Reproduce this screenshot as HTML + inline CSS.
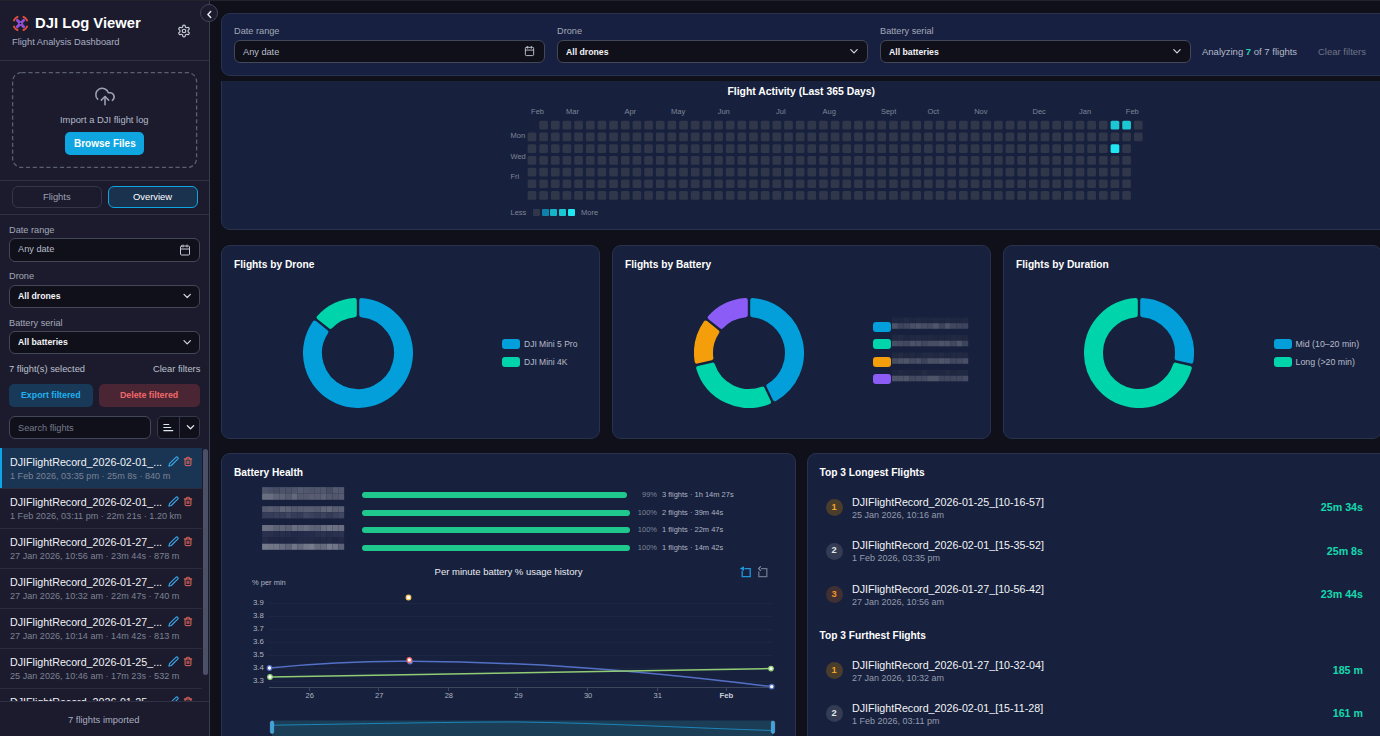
<!DOCTYPE html>
<html><head><meta charset="utf-8">
<style>
*{box-sizing:border-box;margin:0;padding:0}
html,body{width:1380px;height:736px;overflow:hidden;background:#0f1019;font-family:"Liberation Sans",sans-serif;color:#e5e7eb}
.abs{position:absolute}
#topstrip{position:absolute;left:0;top:0;width:1380px;height:1px;background:#22242d;z-index:8}
#sb{position:absolute;left:0;top:0;width:210px;height:736px;background:#1b1b2d;border-right:1px solid #383d4e}
.t{position:absolute;white-space:nowrap;line-height:1}
.hr{position:absolute;left:0;width:209px;height:1px;background:#2f3045}
.inp{position:absolute;background:#10101a;border:1px solid #434859;border-radius:6px}
.lbl{color:#a3a8b8}
.item{position:absolute;left:0;width:202px;height:40px}
.item:after{content:"";position:absolute;left:0;top:40px;width:202px;height:1px;background:#2a2b3e}
.item .n{position:absolute;left:10px;top:8.5px;font-size:10.7px;color:#f1f2f6;white-space:nowrap;line-height:1}
.item .d{position:absolute;left:10px;top:23.5px;font-size:9.1px;color:#7d8294;white-space:nowrap;line-height:1}
.item svg{position:absolute}
#main{position:absolute;left:0;top:0;width:1380px;height:736px;overflow:hidden}
.card{position:absolute;background:#17213d;border:1px solid #27324f;border-radius:9px}
</style></head><body>
<div id="topstrip"></div>
<div id="sb">
  <!-- logo -->
  <svg class="abs" style="left:12px;top:15px" width="17" height="17" viewBox="0 0 17 17">
    <g fill="none" stroke="#e54e3a" stroke-width="1.7" stroke-linecap="butt">
      <path d="M1.6 6.3 A7 7 0 0 1 6.3 1.6"/><path d="M10.7 1.6 A7 7 0 0 1 15.4 6.3"/>
      <path d="M15.4 10.7 A7 7 0 0 1 10.7 15.4"/><path d="M6.3 15.4 A7 7 0 0 1 1.6 10.7"/>
    </g>
    <g stroke="#8f50d6" stroke-width="2.9" stroke-linecap="round"><path d="M5.3 5.3 L11.7 11.7 M11.7 5.3 L5.3 11.7"/></g>
    <circle cx="8.5" cy="8.5" r="2.2" fill="#8f50d6"/>
    <circle cx="8.5" cy="8.5" r="0.8" fill="#15121f"/>
  </svg>
  <div class="t" style="left:35px;top:16px;font-size:14.8px;font-weight:700;color:#fff">DJI Log Viewer</div>
  <div class="t lbl" style="left:12px;top:38px;font-size:9.3px;color:#a9aec0">Flight Analysis Dashboard</div>
  <!-- gear -->
  <svg class="abs" style="left:177px;top:24px" width="14" height="14" viewBox="0 0 24 24" fill="none" stroke="#c9cdd8" stroke-width="2" stroke-linecap="round" stroke-linejoin="round"><path d="M12.22 2h-.44a2 2 0 0 0-2 2v.18a2 2 0 0 1-1 1.73l-.43.25a2 2 0 0 1-2 0l-.15-.08a2 2 0 0 0-2.73.73l-.22.38a2 2 0 0 0 .73 2.73l.15.1a2 2 0 0 1 1 1.72v.51a2 2 0 0 1-1 1.74l-.15.09a2 2 0 0 0-.73 2.73l.22.38a2 2 0 0 0 2.73.73l.15-.08a2 2 0 0 1 2 0l.43.25a2 2 0 0 1 1 1.73V20a2 2 0 0 0 2 2h.44a2 2 0 0 0 2-2v-.18a2 2 0 0 1 1-1.73l.43-.25a2 2 0 0 1 2 0l.15.08a2 2 0 0 0 2.73-.73l.22-.39a2 2 0 0 0-.73-2.73l-.15-.08a2 2 0 0 1-1-1.74v-.5a2 2 0 0 1 1-1.74l.15-.09a2 2 0 0 0 .73-2.73l-.22-.38a2 2 0 0 0-2.73-.73l-.15.08a2 2 0 0 1-2 0l-.43-.25a2 2 0 0 1-1-1.73V4a2 2 0 0 0-2-2z"/><circle cx="12" cy="12" r="3"/></svg>
  <div class="hr" style="top:60px"></div>
  <!-- upload -->
  <svg class="abs" style="left:11px;top:71px" width="188" height="98"><rect x="1.6" y="1.6" width="184" height="94.8" rx="9" fill="none" stroke="#5a5e70" stroke-width="1.3" stroke-dasharray="4.2 2.6"/></svg>
  <svg class="abs" style="left:94px;top:85px" width="22" height="23" viewBox="0 0 24 24" fill="none" stroke="#9ca1b3" stroke-width="1.7" stroke-linecap="round" stroke-linejoin="round"><path d="M4 14.9A7 7 0 1 1 15.7 8h1.8a4.5 4.5 0 0 1 2.5 8.2"/><path d="M12 12v9"/><path d="m16 16-4-4-4 4"/></svg>
  <div class="t" style="left:60px;top:115px;font-size:9.4px;color:#b4b9c8">Import a DJI flight log</div>
  <div class="abs" style="left:65px;top:132px;width:79px;height:23px;background:#0ea5e0;border-radius:5px"></div>
  <div class="t" style="left:74px;top:139px;font-size:10px;font-weight:700;color:#fff">Browse Files</div>
  <div class="hr" style="top:180px"></div>
  <!-- tabs -->
  <div class="abs" style="left:12px;top:186px;width:90px;height:22px;border:1px solid #34364a;border-radius:6px"></div>
  <div class="t" style="left:43px;top:192px;font-size:9.4px;color:#9ca1b3">Flights</div>
  <div class="abs" style="left:108px;top:186px;width:90px;height:22px;border:1px solid #0ea5e0;background:#1b324f;border-radius:6px"></div>
  <div class="t" style="left:133px;top:192px;font-size:9.4px;color:#fff">Overview</div>
  <div class="hr" style="top:214px"></div>
  <!-- filters -->
  <div class="t lbl" style="left:9px;top:225.5px;font-size:9.2px">Date range</div>
  <div class="inp" style="left:9px;top:238px;width:191px;height:24px"></div>
  <div class="t" style="left:18px;top:245px;font-size:9.2px;color:#b9bdca">Any date</div>
  <svg class="abs" style="left:179px;top:244px" width="12" height="12" viewBox="0 0 24 24" fill="none" stroke="#c2c6d2" stroke-width="2" stroke-linecap="round" stroke-linejoin="round"><rect x="3" y="4" width="18" height="18" rx="2"/><path d="M16 2v4M8 2v4M3 10h18"/></svg>
  <div class="t lbl" style="left:9px;top:271.5px;font-size:9.2px">Drone</div>
  <div class="inp" style="left:9px;top:285px;width:191px;height:23px"></div>
  <div class="t" style="left:18px;top:292px;font-size:8.7px;font-weight:700;color:#f3f4f7">All drones</div>
  <svg class="abs" style="left:0;top:0" width="210" height="736"><path d="M184 294.3 L187.2 297.5 L190.4 294.3" fill="none" stroke="#d4d8e0" stroke-width="1.2" stroke-linecap="round" stroke-linejoin="round"/></svg>
  <div class="t lbl" style="left:9px;top:318.5px;font-size:9.2px">Battery serial</div>
  <div class="inp" style="left:9px;top:331px;width:191px;height:23px"></div>
  <div class="t" style="left:18px;top:338px;font-size:8.7px;font-weight:700;color:#f3f4f7">All batteries</div>
  <svg class="abs" style="left:0;top:0" width="210" height="736"><path d="M184 340.6 L187.2 343.8 L190.4 340.6" fill="none" stroke="#d4d8e0" stroke-width="1.2" stroke-linecap="round" stroke-linejoin="round"/></svg>
  <div class="t" style="left:9px;top:364px;font-size:9.4px;color:#bcc0cc">7 flight(s) selected</div>
  <div class="t" style="left:153px;top:364px;font-size:9.4px;color:#bcc0cc">Clear filters</div>
  <div class="abs" style="left:9px;top:384px;width:84px;height:23px;background:#183a58;border-radius:5px"></div>
  <div class="t" style="left:21px;top:391px;font-size:8.8px;font-weight:700;color:#22b0ee">Export filtered</div>
  <div class="abs" style="left:99px;top:384px;width:101px;height:23px;background:#4a2534;border-radius:5px"></div>
  <div class="t" style="left:120px;top:391px;font-size:8.8px;font-weight:700;color:#f06a6a">Delete filtered</div>
  <div class="inp" style="left:9px;top:416px;width:142px;height:23px"></div>
  <div class="t" style="left:18px;top:424px;font-size:9.2px;color:#767b8d">Search flights</div>
  <div class="inp" style="left:157px;top:416px;width:43px;height:23px;background:#10101a;border-color:#343a4b;border-radius:5px"></div>
  <div class="abs" style="left:179px;top:417px;width:1px;height:21px;background:#343a4b"></div>
  <svg class="abs" style="left:0;top:0" width="210" height="736"><path d="M163.8 424.5h5M163.8 427.5h7M163.8 430.6h9" stroke="#dfe6ee" stroke-width="1.1" stroke-linecap="round"/><path d="M187.3 425.6 L190.5 428.8 L193.7 425.6" fill="none" stroke="#e6eaf0" stroke-width="1.3" stroke-linecap="round" stroke-linejoin="round"/></svg>
  <!-- list -->
  <div class="abs" style="left:0;top:448px;width:209px;height:253px;overflow:hidden" id="list"><div class="item" style="top:0px;background:#1a3553;"><div class="abs" style="left:0;top:0;width:2px;height:40px;background:#0ea5e9"></div><div class="n">DJIFlightRecord_2026-02-01_...</div><div class="d">1 Feb 2026, 03:35 pm · 25m 8s · 840 m</div><svg style="left:168px;top:8.3px" width="11" height="11" viewBox="0 0 24 24" fill="none" stroke="#38a8e8" stroke-width="2.4" stroke-linecap="round" stroke-linejoin="round"><path d="M21.2 6.8a2.8 2.8 0 0 0-4-4L3.8 16.2a2 2 0 0 0-.5.8l-1.3 4.4a.5.5 0 0 0 .6.6l4.4-1.3a2 2 0 0 0 .8-.5z"/></svg><svg style="left:183px;top:8.3px" width="10" height="11" viewBox="0 0 24 24" fill="none" stroke="#e8695f" stroke-width="2.4" stroke-linecap="round" stroke-linejoin="round"><path d="M3 6h18M19 6v14a2 2 0 0 1-2 2H7a2 2 0 0 1-2-2V6M8 6V4a2 2 0 0 1 2-2h4a2 2 0 0 1 2 2v2M10 11v6M14 11v6"/></svg></div><div class="item" style="top:40px;"><div class="n">DJIFlightRecord_2026-02-01_...</div><div class="d">1 Feb 2026, 03:11 pm · 22m 21s · 1.20 km</div><svg style="left:168px;top:8.3px" width="11" height="11" viewBox="0 0 24 24" fill="none" stroke="#38a8e8" stroke-width="2.4" stroke-linecap="round" stroke-linejoin="round"><path d="M21.2 6.8a2.8 2.8 0 0 0-4-4L3.8 16.2a2 2 0 0 0-.5.8l-1.3 4.4a.5.5 0 0 0 .6.6l4.4-1.3a2 2 0 0 0 .8-.5z"/></svg><svg style="left:183px;top:8.3px" width="10" height="11" viewBox="0 0 24 24" fill="none" stroke="#e8695f" stroke-width="2.4" stroke-linecap="round" stroke-linejoin="round"><path d="M3 6h18M19 6v14a2 2 0 0 1-2 2H7a2 2 0 0 1-2-2V6M8 6V4a2 2 0 0 1 2-2h4a2 2 0 0 1 2 2v2M10 11v6M14 11v6"/></svg></div><div class="item" style="top:80px;"><div class="n">DJIFlightRecord_2026-01-27_...</div><div class="d">27 Jan 2026, 10:56 am · 23m 44s · 878 m</div><svg style="left:168px;top:8.3px" width="11" height="11" viewBox="0 0 24 24" fill="none" stroke="#38a8e8" stroke-width="2.4" stroke-linecap="round" stroke-linejoin="round"><path d="M21.2 6.8a2.8 2.8 0 0 0-4-4L3.8 16.2a2 2 0 0 0-.5.8l-1.3 4.4a.5.5 0 0 0 .6.6l4.4-1.3a2 2 0 0 0 .8-.5z"/></svg><svg style="left:183px;top:8.3px" width="10" height="11" viewBox="0 0 24 24" fill="none" stroke="#e8695f" stroke-width="2.4" stroke-linecap="round" stroke-linejoin="round"><path d="M3 6h18M19 6v14a2 2 0 0 1-2 2H7a2 2 0 0 1-2-2V6M8 6V4a2 2 0 0 1 2-2h4a2 2 0 0 1 2 2v2M10 11v6M14 11v6"/></svg></div><div class="item" style="top:120px;"><div class="n">DJIFlightRecord_2026-01-27_...</div><div class="d">27 Jan 2026, 10:32 am · 22m 47s · 740 m</div><svg style="left:168px;top:8.3px" width="11" height="11" viewBox="0 0 24 24" fill="none" stroke="#38a8e8" stroke-width="2.4" stroke-linecap="round" stroke-linejoin="round"><path d="M21.2 6.8a2.8 2.8 0 0 0-4-4L3.8 16.2a2 2 0 0 0-.5.8l-1.3 4.4a.5.5 0 0 0 .6.6l4.4-1.3a2 2 0 0 0 .8-.5z"/></svg><svg style="left:183px;top:8.3px" width="10" height="11" viewBox="0 0 24 24" fill="none" stroke="#e8695f" stroke-width="2.4" stroke-linecap="round" stroke-linejoin="round"><path d="M3 6h18M19 6v14a2 2 0 0 1-2 2H7a2 2 0 0 1-2-2V6M8 6V4a2 2 0 0 1 2-2h4a2 2 0 0 1 2 2v2M10 11v6M14 11v6"/></svg></div><div class="item" style="top:160px;"><div class="n">DJIFlightRecord_2026-01-27_...</div><div class="d">27 Jan 2026, 10:14 am · 14m 42s · 813 m</div><svg style="left:168px;top:8.3px" width="11" height="11" viewBox="0 0 24 24" fill="none" stroke="#38a8e8" stroke-width="2.4" stroke-linecap="round" stroke-linejoin="round"><path d="M21.2 6.8a2.8 2.8 0 0 0-4-4L3.8 16.2a2 2 0 0 0-.5.8l-1.3 4.4a.5.5 0 0 0 .6.6l4.4-1.3a2 2 0 0 0 .8-.5z"/></svg><svg style="left:183px;top:8.3px" width="10" height="11" viewBox="0 0 24 24" fill="none" stroke="#e8695f" stroke-width="2.4" stroke-linecap="round" stroke-linejoin="round"><path d="M3 6h18M19 6v14a2 2 0 0 1-2 2H7a2 2 0 0 1-2-2V6M8 6V4a2 2 0 0 1 2-2h4a2 2 0 0 1 2 2v2M10 11v6M14 11v6"/></svg></div><div class="item" style="top:200px;"><div class="n">DJIFlightRecord_2026-01-25_...</div><div class="d">25 Jan 2026, 10:46 am · 17m 23s · 532 m</div><svg style="left:168px;top:8.3px" width="11" height="11" viewBox="0 0 24 24" fill="none" stroke="#38a8e8" stroke-width="2.4" stroke-linecap="round" stroke-linejoin="round"><path d="M21.2 6.8a2.8 2.8 0 0 0-4-4L3.8 16.2a2 2 0 0 0-.5.8l-1.3 4.4a.5.5 0 0 0 .6.6l4.4-1.3a2 2 0 0 0 .8-.5z"/></svg><svg style="left:183px;top:8.3px" width="10" height="11" viewBox="0 0 24 24" fill="none" stroke="#e8695f" stroke-width="2.4" stroke-linecap="round" stroke-linejoin="round"><path d="M3 6h18M19 6v14a2 2 0 0 1-2 2H7a2 2 0 0 1-2-2V6M8 6V4a2 2 0 0 1 2-2h4a2 2 0 0 1 2 2v2M10 11v6M14 11v6"/></svg></div><div class="item" style="top:240px;"><div class="n">DJIFlightRecord_2026-01-25_...</div><div class="d">25 Jan 2026, 10:16 am · 25m 34s · 600 m</div><svg style="left:168px;top:8.3px" width="11" height="11" viewBox="0 0 24 24" fill="none" stroke="#38a8e8" stroke-width="2.4" stroke-linecap="round" stroke-linejoin="round"><path d="M21.2 6.8a2.8 2.8 0 0 0-4-4L3.8 16.2a2 2 0 0 0-.5.8l-1.3 4.4a.5.5 0 0 0 .6.6l4.4-1.3a2 2 0 0 0 .8-.5z"/></svg><svg style="left:183px;top:8.3px" width="10" height="11" viewBox="0 0 24 24" fill="none" stroke="#e8695f" stroke-width="2.4" stroke-linecap="round" stroke-linejoin="round"><path d="M3 6h18M19 6v14a2 2 0 0 1-2 2H7a2 2 0 0 1-2-2V6M8 6V4a2 2 0 0 1 2-2h4a2 2 0 0 1 2 2v2M10 11v6M14 11v6"/></svg></div></div>
  <div class="abs" style="left:203px;top:449px;width:5px;height:226px;background:#4b5067;border-radius:3px"></div>
  <div class="hr" style="top:701px"></div>
  <div class="t" style="left:68px;top:715px;font-size:9.4px;color:#a9aec0">7 flights imported</div>
</div>
<!-- collapse btn -->
<div class="abs" style="left:200px;top:4px;width:18px;height:18px;border-radius:50%;background:#1b1b2d;border:1px solid #40455a;z-index:6"></div>
<svg class="abs" style="left:0;top:0;z-index:7" width="230" height="30"><path d="M210.7 11.5 L207.9 14.5 L210.7 17.5" fill="none" stroke="#e6e8ee" stroke-width="1.5" stroke-linecap="round" stroke-linejoin="round"/></svg>
<div id="main"><div class="abs" style="left:210px;top:0;width:1170px;height:81px;background:#0f1019;z-index:3"></div>
<div class="card" style="left:221px;top:13px;width:1170px;height:63px;z-index:4;background:#172040"></div>
<div class="t" style="left:234px;top:27px;font-size:9.2px;color:#a3a8b8;font-weight:400;z-index:5;">Date range</div>
<div class="t" style="left:557px;top:27px;font-size:9.2px;color:#a3a8b8;font-weight:400;z-index:5;">Drone</div>
<div class="t" style="left:880px;top:27px;font-size:9.2px;color:#a3a8b8;font-weight:400;z-index:5;">Battery serial</div>
<div class="inp" style="left:234px;top:40px;width:311px;height:23px;z-index:5;"></div>
<div class="inp" style="left:557px;top:40px;width:311px;height:23px;z-index:5;"></div>
<div class="inp" style="left:880px;top:40px;width:311px;height:23px;z-index:5;"></div>
<div class="t" style="left:243px;top:47.5px;font-size:9.2px;color:#b9bdca;font-weight:400;z-index:5;">Any date</div>
<svg class="abs" style="left:524px;top:45px;z-index:5;" width="11" height="12" viewBox="0 0 24 24" fill="none" stroke="#c2c6d2" stroke-width="2" stroke-linecap="round" stroke-linejoin="round"><rect x="3" y="4" width="18" height="18" rx="2"/><path d="M16 2v4M8 2v4M3 10h18"/></svg>
<div class="t" style="left:566px;top:47.5px;font-size:8.7px;color:#f3f4f7;font-weight:700;z-index:5;">All drones</div>
<div class="t" style="left:889px;top:47.5px;font-size:8.7px;color:#f3f4f7;font-weight:700;z-index:5;">All batteries</div>
<svg class="abs" style="left:0;top:0;z-index:5;" width="1380" height="80"><path d="M850.8 49.6 L854 52.8 L857.2 49.6" fill="none" stroke="#d4d8e0" stroke-width="1.2" stroke-linecap="round" stroke-linejoin="round"/></svg>
<svg class="abs" style="left:0;top:0;z-index:5;" width="1380" height="80"><path d="M1173.8 49.6 L1177 52.8 L1180.2 49.6" fill="none" stroke="#d4d8e0" stroke-width="1.2" stroke-linecap="round" stroke-linejoin="round"/></svg>
<div class="t" style="left:1202px;top:47px;font-size:9.5px;color:#b4b9c8;font-weight:400;z-index:5;">Analyzing <b style="color:#22d3b0">7</b> of 7 flights</div>
<div class="t" style="left:1318px;top:47px;font-size:9.5px;color:#6f7588;font-weight:400;z-index:5;">Clear filters</div>
<div class="card" style="left:221px;top:40px;width:1170px;height:189.5px"></div>
<div class="t" style="left:727.5px;top:86.5px;font-size:10.4px;color:#ffffff;font-weight:700;">Flight Activity (Last 365 Days)</div>
<svg class="abs" style="left:221px;top:81px" width="1160" height="148"><rect x="306.60" y="51.52" width="8.7" height="8.7" rx="1.5" fill="#31374b"/><rect x="306.60" y="63.24" width="8.7" height="8.7" rx="1.5" fill="#31374b"/><rect x="306.60" y="74.96" width="8.7" height="8.7" rx="1.5" fill="#31374b"/><rect x="306.60" y="86.68" width="8.7" height="8.7" rx="1.5" fill="#31374b"/><rect x="306.60" y="98.40" width="8.7" height="8.7" rx="1.5" fill="#31374b"/><rect x="306.60" y="110.12" width="8.7" height="8.7" rx="1.5" fill="#31374b"/><rect x="318.26" y="39.80" width="8.7" height="8.7" rx="1.5" fill="#31374b"/><rect x="318.26" y="51.52" width="8.7" height="8.7" rx="1.5" fill="#31374b"/><rect x="318.26" y="63.24" width="8.7" height="8.7" rx="1.5" fill="#31374b"/><rect x="318.26" y="74.96" width="8.7" height="8.7" rx="1.5" fill="#31374b"/><rect x="318.26" y="86.68" width="8.7" height="8.7" rx="1.5" fill="#31374b"/><rect x="318.26" y="98.40" width="8.7" height="8.7" rx="1.5" fill="#31374b"/><rect x="318.26" y="110.12" width="8.7" height="8.7" rx="1.5" fill="#31374b"/><rect x="329.92" y="39.80" width="8.7" height="8.7" rx="1.5" fill="#31374b"/><rect x="329.92" y="51.52" width="8.7" height="8.7" rx="1.5" fill="#31374b"/><rect x="329.92" y="63.24" width="8.7" height="8.7" rx="1.5" fill="#31374b"/><rect x="329.92" y="74.96" width="8.7" height="8.7" rx="1.5" fill="#31374b"/><rect x="329.92" y="86.68" width="8.7" height="8.7" rx="1.5" fill="#31374b"/><rect x="329.92" y="98.40" width="8.7" height="8.7" rx="1.5" fill="#31374b"/><rect x="329.92" y="110.12" width="8.7" height="8.7" rx="1.5" fill="#31374b"/><rect x="341.58" y="39.80" width="8.7" height="8.7" rx="1.5" fill="#31374b"/><rect x="341.58" y="51.52" width="8.7" height="8.7" rx="1.5" fill="#31374b"/><rect x="341.58" y="63.24" width="8.7" height="8.7" rx="1.5" fill="#31374b"/><rect x="341.58" y="74.96" width="8.7" height="8.7" rx="1.5" fill="#31374b"/><rect x="341.58" y="86.68" width="8.7" height="8.7" rx="1.5" fill="#31374b"/><rect x="341.58" y="98.40" width="8.7" height="8.7" rx="1.5" fill="#31374b"/><rect x="341.58" y="110.12" width="8.7" height="8.7" rx="1.5" fill="#31374b"/><rect x="353.24" y="39.80" width="8.7" height="8.7" rx="1.5" fill="#31374b"/><rect x="353.24" y="51.52" width="8.7" height="8.7" rx="1.5" fill="#31374b"/><rect x="353.24" y="63.24" width="8.7" height="8.7" rx="1.5" fill="#31374b"/><rect x="353.24" y="74.96" width="8.7" height="8.7" rx="1.5" fill="#31374b"/><rect x="353.24" y="86.68" width="8.7" height="8.7" rx="1.5" fill="#31374b"/><rect x="353.24" y="98.40" width="8.7" height="8.7" rx="1.5" fill="#31374b"/><rect x="353.24" y="110.12" width="8.7" height="8.7" rx="1.5" fill="#31374b"/><rect x="364.90" y="39.80" width="8.7" height="8.7" rx="1.5" fill="#31374b"/><rect x="364.90" y="51.52" width="8.7" height="8.7" rx="1.5" fill="#31374b"/><rect x="364.90" y="63.24" width="8.7" height="8.7" rx="1.5" fill="#31374b"/><rect x="364.90" y="74.96" width="8.7" height="8.7" rx="1.5" fill="#31374b"/><rect x="364.90" y="86.68" width="8.7" height="8.7" rx="1.5" fill="#31374b"/><rect x="364.90" y="98.40" width="8.7" height="8.7" rx="1.5" fill="#31374b"/><rect x="364.90" y="110.12" width="8.7" height="8.7" rx="1.5" fill="#31374b"/><rect x="376.56" y="39.80" width="8.7" height="8.7" rx="1.5" fill="#31374b"/><rect x="376.56" y="51.52" width="8.7" height="8.7" rx="1.5" fill="#31374b"/><rect x="376.56" y="63.24" width="8.7" height="8.7" rx="1.5" fill="#31374b"/><rect x="376.56" y="74.96" width="8.7" height="8.7" rx="1.5" fill="#31374b"/><rect x="376.56" y="86.68" width="8.7" height="8.7" rx="1.5" fill="#31374b"/><rect x="376.56" y="98.40" width="8.7" height="8.7" rx="1.5" fill="#31374b"/><rect x="376.56" y="110.12" width="8.7" height="8.7" rx="1.5" fill="#31374b"/><rect x="388.22" y="39.80" width="8.7" height="8.7" rx="1.5" fill="#31374b"/><rect x="388.22" y="51.52" width="8.7" height="8.7" rx="1.5" fill="#31374b"/><rect x="388.22" y="63.24" width="8.7" height="8.7" rx="1.5" fill="#31374b"/><rect x="388.22" y="74.96" width="8.7" height="8.7" rx="1.5" fill="#31374b"/><rect x="388.22" y="86.68" width="8.7" height="8.7" rx="1.5" fill="#31374b"/><rect x="388.22" y="98.40" width="8.7" height="8.7" rx="1.5" fill="#31374b"/><rect x="388.22" y="110.12" width="8.7" height="8.7" rx="1.5" fill="#31374b"/><rect x="399.88" y="39.80" width="8.7" height="8.7" rx="1.5" fill="#31374b"/><rect x="399.88" y="51.52" width="8.7" height="8.7" rx="1.5" fill="#31374b"/><rect x="399.88" y="63.24" width="8.7" height="8.7" rx="1.5" fill="#31374b"/><rect x="399.88" y="74.96" width="8.7" height="8.7" rx="1.5" fill="#31374b"/><rect x="399.88" y="86.68" width="8.7" height="8.7" rx="1.5" fill="#31374b"/><rect x="399.88" y="98.40" width="8.7" height="8.7" rx="1.5" fill="#31374b"/><rect x="399.88" y="110.12" width="8.7" height="8.7" rx="1.5" fill="#31374b"/><rect x="411.54" y="39.80" width="8.7" height="8.7" rx="1.5" fill="#31374b"/><rect x="411.54" y="51.52" width="8.7" height="8.7" rx="1.5" fill="#31374b"/><rect x="411.54" y="63.24" width="8.7" height="8.7" rx="1.5" fill="#31374b"/><rect x="411.54" y="74.96" width="8.7" height="8.7" rx="1.5" fill="#31374b"/><rect x="411.54" y="86.68" width="8.7" height="8.7" rx="1.5" fill="#31374b"/><rect x="411.54" y="98.40" width="8.7" height="8.7" rx="1.5" fill="#31374b"/><rect x="411.54" y="110.12" width="8.7" height="8.7" rx="1.5" fill="#31374b"/><rect x="423.20" y="39.80" width="8.7" height="8.7" rx="1.5" fill="#31374b"/><rect x="423.20" y="51.52" width="8.7" height="8.7" rx="1.5" fill="#31374b"/><rect x="423.20" y="63.24" width="8.7" height="8.7" rx="1.5" fill="#31374b"/><rect x="423.20" y="74.96" width="8.7" height="8.7" rx="1.5" fill="#31374b"/><rect x="423.20" y="86.68" width="8.7" height="8.7" rx="1.5" fill="#31374b"/><rect x="423.20" y="98.40" width="8.7" height="8.7" rx="1.5" fill="#31374b"/><rect x="423.20" y="110.12" width="8.7" height="8.7" rx="1.5" fill="#31374b"/><rect x="434.86" y="39.80" width="8.7" height="8.7" rx="1.5" fill="#31374b"/><rect x="434.86" y="51.52" width="8.7" height="8.7" rx="1.5" fill="#31374b"/><rect x="434.86" y="63.24" width="8.7" height="8.7" rx="1.5" fill="#31374b"/><rect x="434.86" y="74.96" width="8.7" height="8.7" rx="1.5" fill="#31374b"/><rect x="434.86" y="86.68" width="8.7" height="8.7" rx="1.5" fill="#31374b"/><rect x="434.86" y="98.40" width="8.7" height="8.7" rx="1.5" fill="#31374b"/><rect x="434.86" y="110.12" width="8.7" height="8.7" rx="1.5" fill="#31374b"/><rect x="446.52" y="39.80" width="8.7" height="8.7" rx="1.5" fill="#31374b"/><rect x="446.52" y="51.52" width="8.7" height="8.7" rx="1.5" fill="#31374b"/><rect x="446.52" y="63.24" width="8.7" height="8.7" rx="1.5" fill="#31374b"/><rect x="446.52" y="74.96" width="8.7" height="8.7" rx="1.5" fill="#31374b"/><rect x="446.52" y="86.68" width="8.7" height="8.7" rx="1.5" fill="#31374b"/><rect x="446.52" y="98.40" width="8.7" height="8.7" rx="1.5" fill="#31374b"/><rect x="446.52" y="110.12" width="8.7" height="8.7" rx="1.5" fill="#31374b"/><rect x="458.18" y="39.80" width="8.7" height="8.7" rx="1.5" fill="#31374b"/><rect x="458.18" y="51.52" width="8.7" height="8.7" rx="1.5" fill="#31374b"/><rect x="458.18" y="63.24" width="8.7" height="8.7" rx="1.5" fill="#31374b"/><rect x="458.18" y="74.96" width="8.7" height="8.7" rx="1.5" fill="#31374b"/><rect x="458.18" y="86.68" width="8.7" height="8.7" rx="1.5" fill="#31374b"/><rect x="458.18" y="98.40" width="8.7" height="8.7" rx="1.5" fill="#31374b"/><rect x="458.18" y="110.12" width="8.7" height="8.7" rx="1.5" fill="#31374b"/><rect x="469.84" y="39.80" width="8.7" height="8.7" rx="1.5" fill="#31374b"/><rect x="469.84" y="51.52" width="8.7" height="8.7" rx="1.5" fill="#31374b"/><rect x="469.84" y="63.24" width="8.7" height="8.7" rx="1.5" fill="#31374b"/><rect x="469.84" y="74.96" width="8.7" height="8.7" rx="1.5" fill="#31374b"/><rect x="469.84" y="86.68" width="8.7" height="8.7" rx="1.5" fill="#31374b"/><rect x="469.84" y="98.40" width="8.7" height="8.7" rx="1.5" fill="#31374b"/><rect x="469.84" y="110.12" width="8.7" height="8.7" rx="1.5" fill="#31374b"/><rect x="481.50" y="39.80" width="8.7" height="8.7" rx="1.5" fill="#31374b"/><rect x="481.50" y="51.52" width="8.7" height="8.7" rx="1.5" fill="#31374b"/><rect x="481.50" y="63.24" width="8.7" height="8.7" rx="1.5" fill="#31374b"/><rect x="481.50" y="74.96" width="8.7" height="8.7" rx="1.5" fill="#31374b"/><rect x="481.50" y="86.68" width="8.7" height="8.7" rx="1.5" fill="#31374b"/><rect x="481.50" y="98.40" width="8.7" height="8.7" rx="1.5" fill="#31374b"/><rect x="481.50" y="110.12" width="8.7" height="8.7" rx="1.5" fill="#31374b"/><rect x="493.16" y="39.80" width="8.7" height="8.7" rx="1.5" fill="#31374b"/><rect x="493.16" y="51.52" width="8.7" height="8.7" rx="1.5" fill="#31374b"/><rect x="493.16" y="63.24" width="8.7" height="8.7" rx="1.5" fill="#31374b"/><rect x="493.16" y="74.96" width="8.7" height="8.7" rx="1.5" fill="#31374b"/><rect x="493.16" y="86.68" width="8.7" height="8.7" rx="1.5" fill="#31374b"/><rect x="493.16" y="98.40" width="8.7" height="8.7" rx="1.5" fill="#31374b"/><rect x="493.16" y="110.12" width="8.7" height="8.7" rx="1.5" fill="#31374b"/><rect x="504.82" y="39.80" width="8.7" height="8.7" rx="1.5" fill="#31374b"/><rect x="504.82" y="51.52" width="8.7" height="8.7" rx="1.5" fill="#31374b"/><rect x="504.82" y="63.24" width="8.7" height="8.7" rx="1.5" fill="#31374b"/><rect x="504.82" y="74.96" width="8.7" height="8.7" rx="1.5" fill="#31374b"/><rect x="504.82" y="86.68" width="8.7" height="8.7" rx="1.5" fill="#31374b"/><rect x="504.82" y="98.40" width="8.7" height="8.7" rx="1.5" fill="#31374b"/><rect x="504.82" y="110.12" width="8.7" height="8.7" rx="1.5" fill="#31374b"/><rect x="516.48" y="39.80" width="8.7" height="8.7" rx="1.5" fill="#31374b"/><rect x="516.48" y="51.52" width="8.7" height="8.7" rx="1.5" fill="#31374b"/><rect x="516.48" y="63.24" width="8.7" height="8.7" rx="1.5" fill="#31374b"/><rect x="516.48" y="74.96" width="8.7" height="8.7" rx="1.5" fill="#31374b"/><rect x="516.48" y="86.68" width="8.7" height="8.7" rx="1.5" fill="#31374b"/><rect x="516.48" y="98.40" width="8.7" height="8.7" rx="1.5" fill="#31374b"/><rect x="516.48" y="110.12" width="8.7" height="8.7" rx="1.5" fill="#31374b"/><rect x="528.14" y="39.80" width="8.7" height="8.7" rx="1.5" fill="#31374b"/><rect x="528.14" y="51.52" width="8.7" height="8.7" rx="1.5" fill="#31374b"/><rect x="528.14" y="63.24" width="8.7" height="8.7" rx="1.5" fill="#31374b"/><rect x="528.14" y="74.96" width="8.7" height="8.7" rx="1.5" fill="#31374b"/><rect x="528.14" y="86.68" width="8.7" height="8.7" rx="1.5" fill="#31374b"/><rect x="528.14" y="98.40" width="8.7" height="8.7" rx="1.5" fill="#31374b"/><rect x="528.14" y="110.12" width="8.7" height="8.7" rx="1.5" fill="#31374b"/><rect x="539.80" y="39.80" width="8.7" height="8.7" rx="1.5" fill="#31374b"/><rect x="539.80" y="51.52" width="8.7" height="8.7" rx="1.5" fill="#31374b"/><rect x="539.80" y="63.24" width="8.7" height="8.7" rx="1.5" fill="#31374b"/><rect x="539.80" y="74.96" width="8.7" height="8.7" rx="1.5" fill="#31374b"/><rect x="539.80" y="86.68" width="8.7" height="8.7" rx="1.5" fill="#31374b"/><rect x="539.80" y="98.40" width="8.7" height="8.7" rx="1.5" fill="#31374b"/><rect x="539.80" y="110.12" width="8.7" height="8.7" rx="1.5" fill="#31374b"/><rect x="551.46" y="39.80" width="8.7" height="8.7" rx="1.5" fill="#31374b"/><rect x="551.46" y="51.52" width="8.7" height="8.7" rx="1.5" fill="#31374b"/><rect x="551.46" y="63.24" width="8.7" height="8.7" rx="1.5" fill="#31374b"/><rect x="551.46" y="74.96" width="8.7" height="8.7" rx="1.5" fill="#31374b"/><rect x="551.46" y="86.68" width="8.7" height="8.7" rx="1.5" fill="#31374b"/><rect x="551.46" y="98.40" width="8.7" height="8.7" rx="1.5" fill="#31374b"/><rect x="551.46" y="110.12" width="8.7" height="8.7" rx="1.5" fill="#31374b"/><rect x="563.12" y="39.80" width="8.7" height="8.7" rx="1.5" fill="#31374b"/><rect x="563.12" y="51.52" width="8.7" height="8.7" rx="1.5" fill="#31374b"/><rect x="563.12" y="63.24" width="8.7" height="8.7" rx="1.5" fill="#31374b"/><rect x="563.12" y="74.96" width="8.7" height="8.7" rx="1.5" fill="#31374b"/><rect x="563.12" y="86.68" width="8.7" height="8.7" rx="1.5" fill="#31374b"/><rect x="563.12" y="98.40" width="8.7" height="8.7" rx="1.5" fill="#31374b"/><rect x="563.12" y="110.12" width="8.7" height="8.7" rx="1.5" fill="#31374b"/><rect x="574.78" y="39.80" width="8.7" height="8.7" rx="1.5" fill="#31374b"/><rect x="574.78" y="51.52" width="8.7" height="8.7" rx="1.5" fill="#31374b"/><rect x="574.78" y="63.24" width="8.7" height="8.7" rx="1.5" fill="#31374b"/><rect x="574.78" y="74.96" width="8.7" height="8.7" rx="1.5" fill="#31374b"/><rect x="574.78" y="86.68" width="8.7" height="8.7" rx="1.5" fill="#31374b"/><rect x="574.78" y="98.40" width="8.7" height="8.7" rx="1.5" fill="#31374b"/><rect x="574.78" y="110.12" width="8.7" height="8.7" rx="1.5" fill="#31374b"/><rect x="586.44" y="39.80" width="8.7" height="8.7" rx="1.5" fill="#31374b"/><rect x="586.44" y="51.52" width="8.7" height="8.7" rx="1.5" fill="#31374b"/><rect x="586.44" y="63.24" width="8.7" height="8.7" rx="1.5" fill="#31374b"/><rect x="586.44" y="74.96" width="8.7" height="8.7" rx="1.5" fill="#31374b"/><rect x="586.44" y="86.68" width="8.7" height="8.7" rx="1.5" fill="#31374b"/><rect x="586.44" y="98.40" width="8.7" height="8.7" rx="1.5" fill="#31374b"/><rect x="586.44" y="110.12" width="8.7" height="8.7" rx="1.5" fill="#31374b"/><rect x="598.10" y="39.80" width="8.7" height="8.7" rx="1.5" fill="#31374b"/><rect x="598.10" y="51.52" width="8.7" height="8.7" rx="1.5" fill="#31374b"/><rect x="598.10" y="63.24" width="8.7" height="8.7" rx="1.5" fill="#31374b"/><rect x="598.10" y="74.96" width="8.7" height="8.7" rx="1.5" fill="#31374b"/><rect x="598.10" y="86.68" width="8.7" height="8.7" rx="1.5" fill="#31374b"/><rect x="598.10" y="98.40" width="8.7" height="8.7" rx="1.5" fill="#31374b"/><rect x="598.10" y="110.12" width="8.7" height="8.7" rx="1.5" fill="#31374b"/><rect x="609.76" y="39.80" width="8.7" height="8.7" rx="1.5" fill="#31374b"/><rect x="609.76" y="51.52" width="8.7" height="8.7" rx="1.5" fill="#31374b"/><rect x="609.76" y="63.24" width="8.7" height="8.7" rx="1.5" fill="#31374b"/><rect x="609.76" y="74.96" width="8.7" height="8.7" rx="1.5" fill="#31374b"/><rect x="609.76" y="86.68" width="8.7" height="8.7" rx="1.5" fill="#31374b"/><rect x="609.76" y="98.40" width="8.7" height="8.7" rx="1.5" fill="#31374b"/><rect x="609.76" y="110.12" width="8.7" height="8.7" rx="1.5" fill="#31374b"/><rect x="621.42" y="39.80" width="8.7" height="8.7" rx="1.5" fill="#31374b"/><rect x="621.42" y="51.52" width="8.7" height="8.7" rx="1.5" fill="#31374b"/><rect x="621.42" y="63.24" width="8.7" height="8.7" rx="1.5" fill="#31374b"/><rect x="621.42" y="74.96" width="8.7" height="8.7" rx="1.5" fill="#31374b"/><rect x="621.42" y="86.68" width="8.7" height="8.7" rx="1.5" fill="#31374b"/><rect x="621.42" y="98.40" width="8.7" height="8.7" rx="1.5" fill="#31374b"/><rect x="621.42" y="110.12" width="8.7" height="8.7" rx="1.5" fill="#31374b"/><rect x="633.08" y="39.80" width="8.7" height="8.7" rx="1.5" fill="#31374b"/><rect x="633.08" y="51.52" width="8.7" height="8.7" rx="1.5" fill="#31374b"/><rect x="633.08" y="63.24" width="8.7" height="8.7" rx="1.5" fill="#31374b"/><rect x="633.08" y="74.96" width="8.7" height="8.7" rx="1.5" fill="#31374b"/><rect x="633.08" y="86.68" width="8.7" height="8.7" rx="1.5" fill="#31374b"/><rect x="633.08" y="98.40" width="8.7" height="8.7" rx="1.5" fill="#31374b"/><rect x="633.08" y="110.12" width="8.7" height="8.7" rx="1.5" fill="#31374b"/><rect x="644.74" y="39.80" width="8.7" height="8.7" rx="1.5" fill="#31374b"/><rect x="644.74" y="51.52" width="8.7" height="8.7" rx="1.5" fill="#31374b"/><rect x="644.74" y="63.24" width="8.7" height="8.7" rx="1.5" fill="#31374b"/><rect x="644.74" y="74.96" width="8.7" height="8.7" rx="1.5" fill="#31374b"/><rect x="644.74" y="86.68" width="8.7" height="8.7" rx="1.5" fill="#31374b"/><rect x="644.74" y="98.40" width="8.7" height="8.7" rx="1.5" fill="#31374b"/><rect x="644.74" y="110.12" width="8.7" height="8.7" rx="1.5" fill="#31374b"/><rect x="656.40" y="39.80" width="8.7" height="8.7" rx="1.5" fill="#31374b"/><rect x="656.40" y="51.52" width="8.7" height="8.7" rx="1.5" fill="#31374b"/><rect x="656.40" y="63.24" width="8.7" height="8.7" rx="1.5" fill="#31374b"/><rect x="656.40" y="74.96" width="8.7" height="8.7" rx="1.5" fill="#31374b"/><rect x="656.40" y="86.68" width="8.7" height="8.7" rx="1.5" fill="#31374b"/><rect x="656.40" y="98.40" width="8.7" height="8.7" rx="1.5" fill="#31374b"/><rect x="656.40" y="110.12" width="8.7" height="8.7" rx="1.5" fill="#31374b"/><rect x="668.06" y="39.80" width="8.7" height="8.7" rx="1.5" fill="#31374b"/><rect x="668.06" y="51.52" width="8.7" height="8.7" rx="1.5" fill="#31374b"/><rect x="668.06" y="63.24" width="8.7" height="8.7" rx="1.5" fill="#31374b"/><rect x="668.06" y="74.96" width="8.7" height="8.7" rx="1.5" fill="#31374b"/><rect x="668.06" y="86.68" width="8.7" height="8.7" rx="1.5" fill="#31374b"/><rect x="668.06" y="98.40" width="8.7" height="8.7" rx="1.5" fill="#31374b"/><rect x="668.06" y="110.12" width="8.7" height="8.7" rx="1.5" fill="#31374b"/><rect x="679.72" y="39.80" width="8.7" height="8.7" rx="1.5" fill="#31374b"/><rect x="679.72" y="51.52" width="8.7" height="8.7" rx="1.5" fill="#31374b"/><rect x="679.72" y="63.24" width="8.7" height="8.7" rx="1.5" fill="#31374b"/><rect x="679.72" y="74.96" width="8.7" height="8.7" rx="1.5" fill="#31374b"/><rect x="679.72" y="86.68" width="8.7" height="8.7" rx="1.5" fill="#31374b"/><rect x="679.72" y="98.40" width="8.7" height="8.7" rx="1.5" fill="#31374b"/><rect x="679.72" y="110.12" width="8.7" height="8.7" rx="1.5" fill="#31374b"/><rect x="691.38" y="39.80" width="8.7" height="8.7" rx="1.5" fill="#31374b"/><rect x="691.38" y="51.52" width="8.7" height="8.7" rx="1.5" fill="#31374b"/><rect x="691.38" y="63.24" width="8.7" height="8.7" rx="1.5" fill="#31374b"/><rect x="691.38" y="74.96" width="8.7" height="8.7" rx="1.5" fill="#31374b"/><rect x="691.38" y="86.68" width="8.7" height="8.7" rx="1.5" fill="#31374b"/><rect x="691.38" y="98.40" width="8.7" height="8.7" rx="1.5" fill="#31374b"/><rect x="691.38" y="110.12" width="8.7" height="8.7" rx="1.5" fill="#31374b"/><rect x="703.04" y="39.80" width="8.7" height="8.7" rx="1.5" fill="#31374b"/><rect x="703.04" y="51.52" width="8.7" height="8.7" rx="1.5" fill="#31374b"/><rect x="703.04" y="63.24" width="8.7" height="8.7" rx="1.5" fill="#31374b"/><rect x="703.04" y="74.96" width="8.7" height="8.7" rx="1.5" fill="#31374b"/><rect x="703.04" y="86.68" width="8.7" height="8.7" rx="1.5" fill="#31374b"/><rect x="703.04" y="98.40" width="8.7" height="8.7" rx="1.5" fill="#31374b"/><rect x="703.04" y="110.12" width="8.7" height="8.7" rx="1.5" fill="#31374b"/><rect x="714.70" y="39.80" width="8.7" height="8.7" rx="1.5" fill="#31374b"/><rect x="714.70" y="51.52" width="8.7" height="8.7" rx="1.5" fill="#31374b"/><rect x="714.70" y="63.24" width="8.7" height="8.7" rx="1.5" fill="#31374b"/><rect x="714.70" y="74.96" width="8.7" height="8.7" rx="1.5" fill="#31374b"/><rect x="714.70" y="86.68" width="8.7" height="8.7" rx="1.5" fill="#31374b"/><rect x="714.70" y="98.40" width="8.7" height="8.7" rx="1.5" fill="#31374b"/><rect x="714.70" y="110.12" width="8.7" height="8.7" rx="1.5" fill="#31374b"/><rect x="726.36" y="39.80" width="8.7" height="8.7" rx="1.5" fill="#31374b"/><rect x="726.36" y="51.52" width="8.7" height="8.7" rx="1.5" fill="#31374b"/><rect x="726.36" y="63.24" width="8.7" height="8.7" rx="1.5" fill="#31374b"/><rect x="726.36" y="74.96" width="8.7" height="8.7" rx="1.5" fill="#31374b"/><rect x="726.36" y="86.68" width="8.7" height="8.7" rx="1.5" fill="#31374b"/><rect x="726.36" y="98.40" width="8.7" height="8.7" rx="1.5" fill="#31374b"/><rect x="726.36" y="110.12" width="8.7" height="8.7" rx="1.5" fill="#31374b"/><rect x="738.02" y="39.80" width="8.7" height="8.7" rx="1.5" fill="#31374b"/><rect x="738.02" y="51.52" width="8.7" height="8.7" rx="1.5" fill="#31374b"/><rect x="738.02" y="63.24" width="8.7" height="8.7" rx="1.5" fill="#31374b"/><rect x="738.02" y="74.96" width="8.7" height="8.7" rx="1.5" fill="#31374b"/><rect x="738.02" y="86.68" width="8.7" height="8.7" rx="1.5" fill="#31374b"/><rect x="738.02" y="98.40" width="8.7" height="8.7" rx="1.5" fill="#31374b"/><rect x="738.02" y="110.12" width="8.7" height="8.7" rx="1.5" fill="#31374b"/><rect x="749.68" y="39.80" width="8.7" height="8.7" rx="1.5" fill="#31374b"/><rect x="749.68" y="51.52" width="8.7" height="8.7" rx="1.5" fill="#31374b"/><rect x="749.68" y="63.24" width="8.7" height="8.7" rx="1.5" fill="#31374b"/><rect x="749.68" y="74.96" width="8.7" height="8.7" rx="1.5" fill="#31374b"/><rect x="749.68" y="86.68" width="8.7" height="8.7" rx="1.5" fill="#31374b"/><rect x="749.68" y="98.40" width="8.7" height="8.7" rx="1.5" fill="#31374b"/><rect x="749.68" y="110.12" width="8.7" height="8.7" rx="1.5" fill="#31374b"/><rect x="761.34" y="39.80" width="8.7" height="8.7" rx="1.5" fill="#31374b"/><rect x="761.34" y="51.52" width="8.7" height="8.7" rx="1.5" fill="#31374b"/><rect x="761.34" y="63.24" width="8.7" height="8.7" rx="1.5" fill="#31374b"/><rect x="761.34" y="74.96" width="8.7" height="8.7" rx="1.5" fill="#31374b"/><rect x="761.34" y="86.68" width="8.7" height="8.7" rx="1.5" fill="#31374b"/><rect x="761.34" y="98.40" width="8.7" height="8.7" rx="1.5" fill="#31374b"/><rect x="761.34" y="110.12" width="8.7" height="8.7" rx="1.5" fill="#31374b"/><rect x="773.00" y="39.80" width="8.7" height="8.7" rx="1.5" fill="#31374b"/><rect x="773.00" y="51.52" width="8.7" height="8.7" rx="1.5" fill="#31374b"/><rect x="773.00" y="63.24" width="8.7" height="8.7" rx="1.5" fill="#31374b"/><rect x="773.00" y="74.96" width="8.7" height="8.7" rx="1.5" fill="#31374b"/><rect x="773.00" y="86.68" width="8.7" height="8.7" rx="1.5" fill="#31374b"/><rect x="773.00" y="98.40" width="8.7" height="8.7" rx="1.5" fill="#31374b"/><rect x="773.00" y="110.12" width="8.7" height="8.7" rx="1.5" fill="#31374b"/><rect x="784.66" y="39.80" width="8.7" height="8.7" rx="1.5" fill="#31374b"/><rect x="784.66" y="51.52" width="8.7" height="8.7" rx="1.5" fill="#31374b"/><rect x="784.66" y="63.24" width="8.7" height="8.7" rx="1.5" fill="#31374b"/><rect x="784.66" y="74.96" width="8.7" height="8.7" rx="1.5" fill="#31374b"/><rect x="784.66" y="86.68" width="8.7" height="8.7" rx="1.5" fill="#31374b"/><rect x="784.66" y="98.40" width="8.7" height="8.7" rx="1.5" fill="#31374b"/><rect x="784.66" y="110.12" width="8.7" height="8.7" rx="1.5" fill="#31374b"/><rect x="796.32" y="39.80" width="8.7" height="8.7" rx="1.5" fill="#31374b"/><rect x="796.32" y="51.52" width="8.7" height="8.7" rx="1.5" fill="#31374b"/><rect x="796.32" y="63.24" width="8.7" height="8.7" rx="1.5" fill="#31374b"/><rect x="796.32" y="74.96" width="8.7" height="8.7" rx="1.5" fill="#31374b"/><rect x="796.32" y="86.68" width="8.7" height="8.7" rx="1.5" fill="#31374b"/><rect x="796.32" y="98.40" width="8.7" height="8.7" rx="1.5" fill="#31374b"/><rect x="796.32" y="110.12" width="8.7" height="8.7" rx="1.5" fill="#31374b"/><rect x="807.98" y="39.80" width="8.7" height="8.7" rx="1.5" fill="#31374b"/><rect x="807.98" y="51.52" width="8.7" height="8.7" rx="1.5" fill="#31374b"/><rect x="807.98" y="63.24" width="8.7" height="8.7" rx="1.5" fill="#31374b"/><rect x="807.98" y="74.96" width="8.7" height="8.7" rx="1.5" fill="#31374b"/><rect x="807.98" y="86.68" width="8.7" height="8.7" rx="1.5" fill="#31374b"/><rect x="807.98" y="98.40" width="8.7" height="8.7" rx="1.5" fill="#31374b"/><rect x="807.98" y="110.12" width="8.7" height="8.7" rx="1.5" fill="#31374b"/><rect x="819.64" y="39.80" width="8.7" height="8.7" rx="1.5" fill="#31374b"/><rect x="819.64" y="51.52" width="8.7" height="8.7" rx="1.5" fill="#31374b"/><rect x="819.64" y="63.24" width="8.7" height="8.7" rx="1.5" fill="#31374b"/><rect x="819.64" y="74.96" width="8.7" height="8.7" rx="1.5" fill="#31374b"/><rect x="819.64" y="86.68" width="8.7" height="8.7" rx="1.5" fill="#31374b"/><rect x="819.64" y="98.40" width="8.7" height="8.7" rx="1.5" fill="#31374b"/><rect x="819.64" y="110.12" width="8.7" height="8.7" rx="1.5" fill="#31374b"/><rect x="831.30" y="39.80" width="8.7" height="8.7" rx="1.5" fill="#31374b"/><rect x="831.30" y="51.52" width="8.7" height="8.7" rx="1.5" fill="#31374b"/><rect x="831.30" y="63.24" width="8.7" height="8.7" rx="1.5" fill="#31374b"/><rect x="831.30" y="74.96" width="8.7" height="8.7" rx="1.5" fill="#31374b"/><rect x="831.30" y="86.68" width="8.7" height="8.7" rx="1.5" fill="#31374b"/><rect x="831.30" y="98.40" width="8.7" height="8.7" rx="1.5" fill="#31374b"/><rect x="831.30" y="110.12" width="8.7" height="8.7" rx="1.5" fill="#31374b"/><rect x="842.96" y="39.80" width="8.7" height="8.7" rx="1.5" fill="#31374b"/><rect x="842.96" y="51.52" width="8.7" height="8.7" rx="1.5" fill="#31374b"/><rect x="842.96" y="63.24" width="8.7" height="8.7" rx="1.5" fill="#31374b"/><rect x="842.96" y="74.96" width="8.7" height="8.7" rx="1.5" fill="#31374b"/><rect x="842.96" y="86.68" width="8.7" height="8.7" rx="1.5" fill="#31374b"/><rect x="842.96" y="98.40" width="8.7" height="8.7" rx="1.5" fill="#31374b"/><rect x="842.96" y="110.12" width="8.7" height="8.7" rx="1.5" fill="#31374b"/><rect x="854.62" y="39.80" width="8.7" height="8.7" rx="1.5" fill="#31374b"/><rect x="854.62" y="51.52" width="8.7" height="8.7" rx="1.5" fill="#31374b"/><rect x="854.62" y="63.24" width="8.7" height="8.7" rx="1.5" fill="#31374b"/><rect x="854.62" y="74.96" width="8.7" height="8.7" rx="1.5" fill="#31374b"/><rect x="854.62" y="86.68" width="8.7" height="8.7" rx="1.5" fill="#31374b"/><rect x="854.62" y="98.40" width="8.7" height="8.7" rx="1.5" fill="#31374b"/><rect x="854.62" y="110.12" width="8.7" height="8.7" rx="1.5" fill="#31374b"/><rect x="866.28" y="39.80" width="8.7" height="8.7" rx="1.5" fill="#31374b"/><rect x="866.28" y="51.52" width="8.7" height="8.7" rx="1.5" fill="#31374b"/><rect x="866.28" y="63.24" width="8.7" height="8.7" rx="1.5" fill="#31374b"/><rect x="866.28" y="74.96" width="8.7" height="8.7" rx="1.5" fill="#31374b"/><rect x="866.28" y="86.68" width="8.7" height="8.7" rx="1.5" fill="#31374b"/><rect x="866.28" y="98.40" width="8.7" height="8.7" rx="1.5" fill="#31374b"/><rect x="866.28" y="110.12" width="8.7" height="8.7" rx="1.5" fill="#31374b"/><rect x="877.94" y="39.80" width="8.7" height="8.7" rx="1.5" fill="#31374b"/><rect x="877.94" y="51.52" width="8.7" height="8.7" rx="1.5" fill="#31374b"/><rect x="877.94" y="63.24" width="8.7" height="8.7" rx="1.5" fill="#31374b"/><rect x="877.94" y="74.96" width="8.7" height="8.7" rx="1.5" fill="#31374b"/><rect x="877.94" y="86.68" width="8.7" height="8.7" rx="1.5" fill="#31374b"/><rect x="877.94" y="98.40" width="8.7" height="8.7" rx="1.5" fill="#31374b"/><rect x="877.94" y="110.12" width="8.7" height="8.7" rx="1.5" fill="#31374b"/><rect x="889.60" y="39.80" width="8.7" height="8.7" rx="1.5" fill="#1cc6d3"/><rect x="889.60" y="51.52" width="8.7" height="8.7" rx="1.5" fill="#31374b"/><rect x="889.60" y="63.24" width="8.7" height="8.7" rx="1.5" fill="#1fe6f0"/><rect x="889.60" y="74.96" width="8.7" height="8.7" rx="1.5" fill="#31374b"/><rect x="889.60" y="86.68" width="8.7" height="8.7" rx="1.5" fill="#31374b"/><rect x="889.60" y="98.40" width="8.7" height="8.7" rx="1.5" fill="#31374b"/><rect x="889.60" y="110.12" width="8.7" height="8.7" rx="1.5" fill="#31374b"/><rect x="901.26" y="39.80" width="8.7" height="8.7" rx="1.5" fill="#1cc6d3"/><rect x="901.26" y="51.52" width="8.7" height="8.7" rx="1.5" fill="#31374b"/><rect x="901.26" y="63.24" width="8.7" height="8.7" rx="1.5" fill="#31374b"/><rect x="901.26" y="74.96" width="8.7" height="8.7" rx="1.5" fill="#31374b"/><rect x="901.26" y="86.68" width="8.7" height="8.7" rx="1.5" fill="#31374b"/><rect x="901.26" y="98.40" width="8.7" height="8.7" rx="1.5" fill="#31374b"/><rect x="901.26" y="110.12" width="8.7" height="8.7" rx="1.5" fill="#31374b"/><rect x="912.92" y="39.80" width="8.7" height="8.7" rx="1.5" fill="#31374b"/><rect x="912.92" y="51.52" width="8.7" height="8.7" rx="1.5" fill="#31374b"/></svg>
<div class="t" style="left:531.1px;top:108.3px;font-size:7.5px;color:#7e8598;font-weight:400;">Feb</div>
<div class="t" style="left:566.1px;top:108.3px;font-size:7.5px;color:#7e8598;font-weight:400;">Mar</div>
<div class="t" style="left:624.4px;top:108.3px;font-size:7.5px;color:#7e8598;font-weight:400;">Apr</div>
<div class="t" style="left:671.0px;top:108.3px;font-size:7.5px;color:#7e8598;font-weight:400;">May</div>
<div class="t" style="left:717.7px;top:108.3px;font-size:7.5px;color:#7e8598;font-weight:400;">Jun</div>
<div class="t" style="left:776.0px;top:108.3px;font-size:7.5px;color:#7e8598;font-weight:400;">Jul</div>
<div class="t" style="left:822.6px;top:108.3px;font-size:7.5px;color:#7e8598;font-weight:400;">Aug</div>
<div class="t" style="left:880.9px;top:108.3px;font-size:7.5px;color:#7e8598;font-weight:400;">Sept</div>
<div class="t" style="left:927.5px;top:108.3px;font-size:7.5px;color:#7e8598;font-weight:400;">Oct</div>
<div class="t" style="left:974.2px;top:108.3px;font-size:7.5px;color:#7e8598;font-weight:400;">Nov</div>
<div class="t" style="left:1032.5px;top:108.3px;font-size:7.5px;color:#7e8598;font-weight:400;">Dec</div>
<div class="t" style="left:1079.1px;top:108.3px;font-size:7.5px;color:#7e8598;font-weight:400;">Jan</div>
<div class="t" style="left:1125.8px;top:108.3px;font-size:7.5px;color:#7e8598;font-weight:400;">Feb</div>
<div class="t" style="left:510.5px;top:132px;font-size:7.5px;color:#7e8598;font-weight:400;">Mon</div>
<div class="t" style="left:510.5px;top:152.5px;font-size:7.5px;color:#7e8598;font-weight:400;">Wed</div>
<div class="t" style="left:510.5px;top:172.5px;font-size:7.5px;color:#7e8598;font-weight:400;">Fri</div>
<div class="t" style="left:510.5px;top:208.5px;font-size:7.5px;color:#7e8598;font-weight:400;">Less</div>
<div class="abs" style="left:532.9px;top:209px;width:7px;height:7px;border-radius:1px;background:#31374b"></div>
<div class="abs" style="left:541.6px;top:209px;width:7px;height:7px;border-radius:1px;background:#0f80aa"></div>
<div class="abs" style="left:550.3px;top:209px;width:7px;height:7px;border-radius:1px;background:#14b3c6"></div>
<div class="abs" style="left:559.0px;top:209px;width:7px;height:7px;border-radius:1px;background:#1ac8d5"></div>
<div class="abs" style="left:567.7px;top:209px;width:7px;height:7px;border-radius:1px;background:#1fe8f0"></div>
<div class="t" style="left:581px;top:208.5px;font-size:7.5px;color:#7e8598;font-weight:400;">More</div>
<div class="card" style="left:221px;top:244.5px;width:379px;height:194px"></div>
<div class="t" style="left:234px;top:260px;font-size:10.2px;color:#ffffff;font-weight:700;">Flights by Drone</div>
<div class="card" style="left:612px;top:244.5px;width:379px;height:194px"></div>
<div class="t" style="left:625px;top:260px;font-size:10.2px;color:#ffffff;font-weight:700;">Flights by Battery</div>
<div class="card" style="left:1003px;top:244.5px;width:379px;height:194px"></div>
<div class="t" style="left:1016px;top:260px;font-size:10.2px;color:#ffffff;font-weight:700;">Flights by Duration</div>
<svg class="abs" style="left:303px;top:298px" width="110" height="110"><path d="M58.40 2.31 A52.8 52.8 0 1 1 11.69 24.80 L23.14 33.93 A38.2 38.2 0 1 0 58.40 16.95Z" fill="#039fdb" stroke="#039fdb" stroke-width="4.4" stroke-linejoin="round"/><path d="M15.92 19.49 A52.8 52.8 0 0 1 51.60 2.31 L51.60 16.95 A38.2 38.2 0 0 0 27.37 28.62Z" fill="#00d4aa" stroke="#00d4aa" stroke-width="4.4" stroke-linejoin="round"/></svg>
<svg class="abs" style="left:693.5px;top:298px" width="110" height="110"><path d="M58.40 2.31 A52.8 52.8 0 0 1 80.92 101.00 L74.57 87.81 A38.2 38.2 0 0 0 58.40 16.95Z" fill="#039fdb" stroke="#039fdb" stroke-width="4.4" stroke-linejoin="round"/><path d="M74.80 103.95 A52.8 52.8 0 0 1 4.39 70.04 L18.66 66.78 A38.2 38.2 0 0 0 68.45 90.75Z" fill="#00d4aa" stroke="#00d4aa" stroke-width="4.4" stroke-linejoin="round"/><path d="M2.87 63.41 A52.8 52.8 0 0 1 11.69 24.80 L23.14 33.93 A38.2 38.2 0 0 0 17.15 60.16Z" fill="#f59e0b" stroke="#f59e0b" stroke-width="4.4" stroke-linejoin="round"/><path d="M15.92 19.49 A52.8 52.8 0 0 1 51.60 2.31 L51.60 16.95 A38.2 38.2 0 0 0 27.37 28.62Z" fill="#8b5cf6" stroke="#8b5cf6" stroke-width="4.4" stroke-linejoin="round"/></svg>
<svg class="abs" style="left:1084px;top:298px" width="110" height="110"><path d="M58.40 2.31 A52.8 52.8 0 0 1 107.13 63.41 L92.85 60.16 A38.2 38.2 0 0 0 58.40 16.95Z" fill="#039fdb" stroke="#039fdb" stroke-width="4.4" stroke-linejoin="round"/><path d="M105.61 70.04 A52.8 52.8 0 1 1 51.60 2.31 L51.60 16.95 A38.2 38.2 0 1 0 91.34 66.78Z" fill="#00d4aa" stroke="#00d4aa" stroke-width="4.4" stroke-linejoin="round"/></svg>
<div class="abs" style="left:502px;top:339px;width:18px;height:10px;border-radius:3px;background:#039fdb"></div>
<div class="t" style="left:524px;top:340px;font-size:8.5px;color:#b8bccb;font-weight:400;">DJI Mini 5 Pro</div>
<div class="abs" style="left:502px;top:356.5px;width:18px;height:10px;border-radius:3px;background:#00d4aa"></div>
<div class="t" style="left:524px;top:357.5px;font-size:8.5px;color:#b8bccb;font-weight:400;">DJI Mini 4K</div>
<div class="abs" style="left:872.6px;top:321.8px;width:18.4px;height:10px;border-radius:3px;background:#039fdb"></div>
<div class="abs" style="left:872.6px;top:339.3px;width:18.4px;height:10px;border-radius:3px;background:#00d4aa"></div>
<div class="abs" style="left:872.6px;top:356.8px;width:18.4px;height:10px;border-radius:3px;background:#f59e0b"></div>
<div class="abs" style="left:872.6px;top:374.3px;width:18.4px;height:10px;border-radius:3px;background:#8b5cf6"></div>
<div class="abs" style="left:1274px;top:339px;width:18px;height:10px;border-radius:3px;background:#039fdb"></div>
<div class="t" style="left:1295.5px;top:340px;font-size:8.8px;color:#b8bccb;font-weight:400;">Mid (10–20 min)</div>
<div class="abs" style="left:1274px;top:357px;width:18px;height:10px;border-radius:3px;background:#00d4aa"></div>
<div class="t" style="left:1295.5px;top:358px;font-size:8.8px;color:#b8bccb;font-weight:400;">Long (&gt;20 min)</div>
<div class="card" style="left:221px;top:453px;width:575px;height:320px"></div>
<div class="card" style="left:807px;top:453px;width:585px;height:320px"></div>
<div class="t" style="left:234px;top:467.5px;font-size:10.2px;color:#ffffff;font-weight:700;">Battery Health</div>
<div class="abs" style="left:362px;top:491.9px;width:264.9px;height:6px;border-radius:3px;background:#1fc88c"></div>
<div class="t" style="left:0px;top:491.2px;font-size:7.5px;color:#7f8598;font-weight:400;left:auto;right:723px">99%</div>
<div class="t" style="left:662px;top:491.2px;font-size:7.5px;color:#aeb3c2;font-weight:400;">3 flights · 1h 14m 27s</div>
<div class="abs" style="left:362px;top:509.5px;width:267.6px;height:6px;border-radius:3px;background:#1fc88c"></div>
<div class="t" style="left:0px;top:508.8px;font-size:7.5px;color:#7f8598;font-weight:400;left:auto;right:723px">100%</div>
<div class="t" style="left:662px;top:508.8px;font-size:7.5px;color:#aeb3c2;font-weight:400;">2 flights · 39m 44s</div>
<div class="abs" style="left:362px;top:527.1px;width:267.6px;height:6px;border-radius:3px;background:#1fc88c"></div>
<div class="t" style="left:0px;top:526.4px;font-size:7.5px;color:#7f8598;font-weight:400;left:auto;right:723px">100%</div>
<div class="t" style="left:662px;top:526.4px;font-size:7.5px;color:#aeb3c2;font-weight:400;">1 flights · 22m 47s</div>
<div class="abs" style="left:362px;top:544.7px;width:267.6px;height:6px;border-radius:3px;background:#1fc88c"></div>
<div class="t" style="left:0px;top:544.0px;font-size:7.5px;color:#7f8598;font-weight:400;left:auto;right:723px">100%</div>
<div class="t" style="left:662px;top:544.0px;font-size:7.5px;color:#aeb3c2;font-weight:400;">1 flights · 14m 42s</div>
<svg class="abs" style="left:0;top:0" width="1380" height="736"><rect x="892.00" y="317.50" width="5.91" height="5.70" fill="#202841"/><rect x="897.86" y="317.50" width="5.91" height="5.70" fill="#1f2740"/><rect x="903.72" y="317.50" width="5.91" height="5.70" fill="#222a43"/><rect x="909.58" y="317.50" width="5.91" height="5.70" fill="#1e2640"/><rect x="915.44" y="317.50" width="5.91" height="5.70" fill="#212942"/><rect x="921.30" y="317.50" width="5.91" height="5.70" fill="#202841"/><rect x="927.16" y="317.50" width="5.91" height="5.70" fill="#1e2640"/><rect x="933.02" y="317.50" width="5.91" height="5.70" fill="#212942"/><rect x="938.88" y="317.50" width="5.91" height="5.70" fill="#1e2640"/><rect x="944.74" y="317.50" width="5.91" height="5.70" fill="#212942"/><rect x="950.60" y="317.50" width="5.91" height="5.70" fill="#1e2640"/><rect x="956.46" y="317.50" width="5.91" height="5.70" fill="#1f2740"/><rect x="962.32" y="317.50" width="5.91" height="5.70" fill="#212942"/><rect x="892.00" y="323.20" width="5.91" height="5.60" fill="#4d5367"/><rect x="897.86" y="323.20" width="5.91" height="5.60" fill="#3e445c"/><rect x="903.72" y="323.20" width="5.91" height="5.60" fill="#40465e"/><rect x="909.58" y="323.20" width="5.91" height="5.60" fill="#494f64"/><rect x="915.44" y="323.20" width="5.91" height="5.60" fill="#4f5569"/><rect x="921.30" y="323.20" width="5.91" height="5.60" fill="#484e63"/><rect x="927.16" y="323.20" width="5.91" height="5.60" fill="#444a60"/><rect x="933.02" y="323.20" width="5.91" height="5.60" fill="#50566a"/><rect x="938.88" y="323.20" width="5.91" height="5.60" fill="#3d435b"/><rect x="944.74" y="323.20" width="5.91" height="5.60" fill="#4d5368"/><rect x="950.60" y="323.20" width="5.91" height="5.60" fill="#42485f"/><rect x="956.46" y="323.20" width="5.91" height="5.60" fill="#3f455c"/><rect x="962.32" y="323.20" width="5.91" height="5.60" fill="#3e445c"/><rect x="892.00" y="335.00" width="5.91" height="5.70" fill="#202841"/><rect x="897.86" y="335.00" width="5.91" height="5.70" fill="#232b44"/><rect x="903.72" y="335.00" width="5.91" height="5.70" fill="#1f2740"/><rect x="909.58" y="335.00" width="5.91" height="5.70" fill="#212942"/><rect x="915.44" y="335.00" width="5.91" height="5.70" fill="#222a43"/><rect x="921.30" y="335.00" width="5.91" height="5.70" fill="#202841"/><rect x="927.16" y="335.00" width="5.91" height="5.70" fill="#212942"/><rect x="933.02" y="335.00" width="5.91" height="5.70" fill="#1e2640"/><rect x="938.88" y="335.00" width="5.91" height="5.70" fill="#1e2640"/><rect x="944.74" y="335.00" width="5.91" height="5.70" fill="#1f2741"/><rect x="950.60" y="335.00" width="5.91" height="5.70" fill="#222a43"/><rect x="956.46" y="335.00" width="5.91" height="5.70" fill="#212942"/><rect x="962.32" y="335.00" width="5.91" height="5.70" fill="#202841"/><rect x="892.00" y="340.70" width="5.91" height="5.60" fill="#484e63"/><rect x="897.86" y="340.70" width="5.91" height="5.60" fill="#454b61"/><rect x="903.72" y="340.70" width="5.91" height="5.60" fill="#42485f"/><rect x="909.58" y="340.70" width="5.91" height="5.60" fill="#4c5267"/><rect x="915.44" y="340.70" width="5.91" height="5.60" fill="#4a5065"/><rect x="921.30" y="340.70" width="5.91" height="5.60" fill="#41475e"/><rect x="927.16" y="340.70" width="5.91" height="5.60" fill="#474d63"/><rect x="933.02" y="340.70" width="5.91" height="5.60" fill="#474d62"/><rect x="938.88" y="340.70" width="5.91" height="5.60" fill="#4e5468"/><rect x="944.74" y="340.70" width="5.91" height="5.60" fill="#4b5166"/><rect x="950.60" y="340.70" width="5.91" height="5.60" fill="#42485f"/><rect x="956.46" y="340.70" width="5.91" height="5.60" fill="#50566a"/><rect x="962.32" y="340.70" width="5.91" height="5.60" fill="#3e445c"/><rect x="892.00" y="352.50" width="5.91" height="5.70" fill="#212942"/><rect x="897.86" y="352.50" width="5.91" height="5.70" fill="#232b43"/><rect x="903.72" y="352.50" width="5.91" height="5.70" fill="#1f2740"/><rect x="909.58" y="352.50" width="5.91" height="5.70" fill="#212942"/><rect x="915.44" y="352.50" width="5.91" height="5.70" fill="#1e2640"/><rect x="921.30" y="352.50" width="5.91" height="5.70" fill="#222a43"/><rect x="927.16" y="352.50" width="5.91" height="5.70" fill="#232b43"/><rect x="933.02" y="352.50" width="5.91" height="5.70" fill="#212942"/><rect x="938.88" y="352.50" width="5.91" height="5.70" fill="#232b44"/><rect x="944.74" y="352.50" width="5.91" height="5.70" fill="#202841"/><rect x="950.60" y="352.50" width="5.91" height="5.70" fill="#222a43"/><rect x="956.46" y="352.50" width="5.91" height="5.70" fill="#222a42"/><rect x="962.32" y="352.50" width="5.91" height="5.70" fill="#212942"/><rect x="892.00" y="358.20" width="5.91" height="5.60" fill="#454b61"/><rect x="897.86" y="358.20" width="5.91" height="5.60" fill="#4d5367"/><rect x="903.72" y="358.20" width="5.91" height="5.60" fill="#4f5569"/><rect x="909.58" y="358.20" width="5.91" height="5.60" fill="#454b62"/><rect x="915.44" y="358.20" width="5.91" height="5.60" fill="#494f65"/><rect x="921.30" y="358.20" width="5.91" height="5.60" fill="#3d435b"/><rect x="927.16" y="358.20" width="5.91" height="5.60" fill="#4a5065"/><rect x="933.02" y="358.20" width="5.91" height="5.60" fill="#494f64"/><rect x="938.88" y="358.20" width="5.91" height="5.60" fill="#50566a"/><rect x="944.74" y="358.20" width="5.91" height="5.60" fill="#4c5267"/><rect x="950.60" y="358.20" width="5.91" height="5.60" fill="#42485f"/><rect x="956.46" y="358.20" width="5.91" height="5.60" fill="#444a60"/><rect x="962.32" y="358.20" width="5.91" height="5.60" fill="#494f65"/><rect x="892.00" y="370.00" width="5.91" height="5.70" fill="#1e2640"/><rect x="897.86" y="370.00" width="5.91" height="5.70" fill="#212942"/><rect x="903.72" y="370.00" width="5.91" height="5.70" fill="#1f2740"/><rect x="909.58" y="370.00" width="5.91" height="5.70" fill="#1f2740"/><rect x="915.44" y="370.00" width="5.91" height="5.70" fill="#1e2640"/><rect x="921.30" y="370.00" width="5.91" height="5.70" fill="#232b43"/><rect x="927.16" y="370.00" width="5.91" height="5.70" fill="#1f2740"/><rect x="933.02" y="370.00" width="5.91" height="5.70" fill="#1f2741"/><rect x="938.88" y="370.00" width="5.91" height="5.70" fill="#202841"/><rect x="944.74" y="370.00" width="5.91" height="5.70" fill="#232b44"/><rect x="950.60" y="370.00" width="5.91" height="5.70" fill="#1e2640"/><rect x="956.46" y="370.00" width="5.91" height="5.70" fill="#212942"/><rect x="962.32" y="370.00" width="5.91" height="5.70" fill="#212942"/><rect x="892.00" y="375.70" width="5.91" height="5.60" fill="#4e5468"/><rect x="897.86" y="375.70" width="5.91" height="5.60" fill="#4c5267"/><rect x="903.72" y="375.70" width="5.91" height="5.60" fill="#4d5368"/><rect x="909.58" y="375.70" width="5.91" height="5.60" fill="#42485e"/><rect x="915.44" y="375.70" width="5.91" height="5.60" fill="#444a61"/><rect x="921.30" y="375.70" width="5.91" height="5.60" fill="#434960"/><rect x="927.16" y="375.70" width="5.91" height="5.60" fill="#4e5468"/><rect x="933.02" y="375.70" width="5.91" height="5.60" fill="#4f5569"/><rect x="938.88" y="375.70" width="5.91" height="5.60" fill="#3f455c"/><rect x="944.74" y="375.70" width="5.91" height="5.60" fill="#40465d"/><rect x="950.60" y="375.70" width="5.91" height="5.60" fill="#41475e"/><rect x="956.46" y="375.70" width="5.91" height="5.60" fill="#41475e"/><rect x="962.32" y="375.70" width="5.91" height="5.60" fill="#464c62"/><rect x="262.10" y="487.10" width="5.91" height="6.20" fill="#4f556b"/><rect x="267.96" y="487.10" width="5.91" height="6.20" fill="#4a5067"/><rect x="273.82" y="487.10" width="5.91" height="6.20" fill="#464c64"/><rect x="279.68" y="487.10" width="5.91" height="6.20" fill="#4d5369"/><rect x="285.54" y="487.10" width="5.91" height="6.20" fill="#4c5268"/><rect x="291.40" y="487.10" width="5.91" height="6.20" fill="#4f556b"/><rect x="297.26" y="487.10" width="5.91" height="6.20" fill="#555b70"/><rect x="303.12" y="487.10" width="5.91" height="6.20" fill="#51576c"/><rect x="308.98" y="487.10" width="5.91" height="6.20" fill="#4e546a"/><rect x="314.84" y="487.10" width="5.91" height="6.20" fill="#50566c"/><rect x="320.70" y="487.10" width="5.91" height="6.20" fill="#51576c"/><rect x="326.56" y="487.10" width="5.91" height="6.20" fill="#474d64"/><rect x="332.42" y="487.10" width="5.91" height="6.20" fill="#545a6f"/><rect x="338.28" y="487.10" width="5.91" height="6.20" fill="#52586e"/><rect x="262.10" y="493.30" width="5.91" height="6.50" fill="#6a6f80"/><rect x="267.96" y="493.30" width="5.91" height="6.50" fill="#686d7f"/><rect x="273.82" y="493.30" width="5.91" height="6.50" fill="#5d6276"/><rect x="279.68" y="493.30" width="5.91" height="6.50" fill="#5d6276"/><rect x="285.54" y="493.30" width="5.91" height="6.50" fill="#555a6f"/><rect x="291.40" y="493.30" width="5.91" height="6.50" fill="#64697b"/><rect x="297.26" y="493.30" width="5.91" height="6.50" fill="#54596e"/><rect x="303.12" y="493.30" width="5.91" height="6.50" fill="#54596e"/><rect x="308.98" y="493.30" width="5.91" height="6.50" fill="#585d71"/><rect x="314.84" y="493.30" width="5.91" height="6.50" fill="#575c70"/><rect x="320.70" y="493.30" width="5.91" height="6.50" fill="#5c6174"/><rect x="326.56" y="493.30" width="5.91" height="6.50" fill="#53586e"/><rect x="332.42" y="493.30" width="5.91" height="6.50" fill="#52576d"/><rect x="338.28" y="493.30" width="5.91" height="6.50" fill="#565b70"/><rect x="262.10" y="506.20" width="5.91" height="6.10" fill="#54596e"/><rect x="267.96" y="506.20" width="5.91" height="6.10" fill="#585d71"/><rect x="273.82" y="506.20" width="5.91" height="6.10" fill="#52576d"/><rect x="279.68" y="506.20" width="5.91" height="6.10" fill="#606578"/><rect x="285.54" y="506.20" width="5.91" height="6.10" fill="#5c6174"/><rect x="291.40" y="506.20" width="5.91" height="6.10" fill="#54596f"/><rect x="297.26" y="506.20" width="5.91" height="6.10" fill="#565b70"/><rect x="303.12" y="506.20" width="5.91" height="6.10" fill="#585d71"/><rect x="308.98" y="506.20" width="5.91" height="6.10" fill="#585d71"/><rect x="314.84" y="506.20" width="5.91" height="6.10" fill="#54596e"/><rect x="320.70" y="506.20" width="5.91" height="6.10" fill="#606577"/><rect x="326.56" y="506.20" width="5.91" height="6.10" fill="#626779"/><rect x="332.42" y="506.20" width="5.91" height="6.10" fill="#595e73"/><rect x="338.28" y="506.20" width="5.91" height="6.10" fill="#5a5f73"/><rect x="262.10" y="512.30" width="5.91" height="6.10" fill="#353c58"/><rect x="267.96" y="512.30" width="5.91" height="6.10" fill="#353c58"/><rect x="273.82" y="512.30" width="5.91" height="6.10" fill="#383f5a"/><rect x="279.68" y="512.30" width="5.91" height="6.10" fill="#373e5a"/><rect x="285.54" y="512.30" width="5.91" height="6.10" fill="#3e455f"/><rect x="291.40" y="512.30" width="5.91" height="6.10" fill="#363d59"/><rect x="297.26" y="512.30" width="5.91" height="6.10" fill="#343b57"/><rect x="303.12" y="512.30" width="5.91" height="6.10" fill="#3f4660"/><rect x="308.98" y="512.30" width="5.91" height="6.10" fill="#3a415c"/><rect x="314.84" y="512.30" width="5.91" height="6.10" fill="#363d59"/><rect x="320.70" y="512.30" width="5.91" height="6.10" fill="#3b425c"/><rect x="326.56" y="512.30" width="5.91" height="6.10" fill="#343b57"/><rect x="332.42" y="512.30" width="5.91" height="6.10" fill="#3a415c"/><rect x="338.28" y="512.30" width="5.91" height="6.10" fill="#404761"/><rect x="262.10" y="525.00" width="5.91" height="6.00" fill="#6b7081"/><rect x="267.96" y="525.00" width="5.91" height="6.00" fill="#676c7e"/><rect x="273.82" y="525.00" width="5.91" height="6.00" fill="#5c6175"/><rect x="279.68" y="525.00" width="5.91" height="6.00" fill="#5f6477"/><rect x="285.54" y="525.00" width="5.91" height="6.00" fill="#5a5f74"/><rect x="291.40" y="525.00" width="5.91" height="6.00" fill="#696e7f"/><rect x="297.26" y="525.00" width="5.91" height="6.00" fill="#63687b"/><rect x="303.12" y="525.00" width="5.91" height="6.00" fill="#696e7f"/><rect x="308.98" y="525.00" width="5.91" height="6.00" fill="#5e6377"/><rect x="314.84" y="525.00" width="5.91" height="6.00" fill="#5b6075"/><rect x="320.70" y="525.00" width="5.91" height="6.00" fill="#696e80"/><rect x="326.56" y="525.00" width="5.91" height="6.00" fill="#6e7383"/><rect x="332.42" y="525.00" width="5.91" height="6.00" fill="#6a6f81"/><rect x="338.28" y="525.00" width="5.91" height="6.00" fill="#696e80"/><rect x="262.10" y="531.00" width="5.91" height="6.00" fill="#29314e"/><rect x="267.96" y="531.00" width="5.91" height="6.00" fill="#28304e"/><rect x="273.82" y="531.00" width="5.91" height="6.00" fill="#242c4a"/><rect x="279.68" y="531.00" width="5.91" height="6.00" fill="#262e4c"/><rect x="285.54" y="531.00" width="5.91" height="6.00" fill="#252d4b"/><rect x="291.40" y="531.00" width="5.91" height="6.00" fill="#222a49"/><rect x="297.26" y="531.00" width="5.91" height="6.00" fill="#222a49"/><rect x="303.12" y="531.00" width="5.91" height="6.00" fill="#242c4b"/><rect x="308.98" y="531.00" width="5.91" height="6.00" fill="#242c4a"/><rect x="314.84" y="531.00" width="5.91" height="6.00" fill="#28304d"/><rect x="320.70" y="531.00" width="5.91" height="6.00" fill="#2a324f"/><rect x="326.56" y="531.00" width="5.91" height="6.00" fill="#262e4c"/><rect x="332.42" y="531.00" width="5.91" height="6.00" fill="#29314f"/><rect x="338.28" y="531.00" width="5.91" height="6.00" fill="#2a324f"/><rect x="262.10" y="537.00" width="5.91" height="6.70" fill="#232b46"/><rect x="267.96" y="537.00" width="5.91" height="6.70" fill="#1f2743"/><rect x="273.82" y="537.00" width="5.91" height="6.70" fill="#1e2643"/><rect x="279.68" y="537.00" width="5.91" height="6.70" fill="#1e2643"/><rect x="285.54" y="537.00" width="5.91" height="6.70" fill="#1e2643"/><rect x="291.40" y="537.00" width="5.91" height="6.70" fill="#1e2643"/><rect x="297.26" y="537.00" width="5.91" height="6.70" fill="#212945"/><rect x="303.12" y="537.00" width="5.91" height="6.70" fill="#222a46"/><rect x="308.98" y="537.00" width="5.91" height="6.70" fill="#222a46"/><rect x="314.84" y="537.00" width="5.91" height="6.70" fill="#202844"/><rect x="320.70" y="537.00" width="5.91" height="6.70" fill="#212945"/><rect x="326.56" y="537.00" width="5.91" height="6.70" fill="#222a45"/><rect x="332.42" y="537.00" width="5.91" height="6.70" fill="#1e2642"/><rect x="338.28" y="537.00" width="5.91" height="6.70" fill="#212945"/><rect x="262.10" y="543.70" width="5.91" height="6.10" fill="#757a8a"/><rect x="267.96" y="543.70" width="5.91" height="6.10" fill="#717687"/><rect x="273.82" y="543.70" width="5.91" height="6.10" fill="#707586"/><rect x="279.68" y="543.70" width="5.91" height="6.10" fill="#676c7f"/><rect x="285.54" y="543.70" width="5.91" height="6.10" fill="#5e6378"/><rect x="291.40" y="543.70" width="5.91" height="6.10" fill="#717687"/><rect x="297.26" y="543.70" width="5.91" height="6.10" fill="#63687c"/><rect x="303.12" y="543.70" width="5.91" height="6.10" fill="#727788"/><rect x="308.98" y="543.70" width="5.91" height="6.10" fill="#777c8c"/><rect x="314.84" y="543.70" width="5.91" height="6.10" fill="#656a7d"/><rect x="320.70" y="543.70" width="5.91" height="6.10" fill="#656a7d"/><rect x="326.56" y="543.70" width="5.91" height="6.10" fill="#767b8b"/><rect x="332.42" y="543.70" width="5.91" height="6.10" fill="#6f7486"/><rect x="338.28" y="543.70" width="5.91" height="6.10" fill="#5d6278"/></svg>
<div class="t" style="left:434.6px;top:566.5px;font-size:9.5px;color:#e8eaf0;font-weight:400;">Per minute battery % usage history</div>
<svg class="abs" style="left:0;top:0" width="1380" height="736"><path d="M744.5 568.6 H750.2 V576.6 H742.2 V570.8" fill="none" stroke="#1e96dc" stroke-width="1.3"/><path d="M739.8 568.6 L744 566.2 V571 Z" fill="#1e96dc"/><path d="M761 568.6 H766.8 V576.6 H758.8 V571.5" fill="none" stroke="#6d7589" stroke-width="1.3"/><path d="M760.8 566.4 L758.6 568.6 L760.8 570.8" fill="none" stroke="#8b92a6" stroke-width="1.1"/></svg>
<div class="t" style="left:252px;top:578.5px;font-size:7.5px;color:#aeb3c2;font-weight:400;">% per min</div>
<div class="t" style="left:253px;top:598.9000000000001px;font-size:7.8px;color:#aeb3c2;font-weight:400;">3.9</div>
<div class="abs" style="left:269px;top:602.7px;width:503px;height:1px;background:#1d2741"></div>
<div class="t" style="left:253px;top:611.9000000000001px;font-size:7.8px;color:#aeb3c2;font-weight:400;">3.8</div>
<div class="abs" style="left:269px;top:615.7px;width:503px;height:1px;background:#1d2741"></div>
<div class="t" style="left:253px;top:624.9000000000001px;font-size:7.8px;color:#aeb3c2;font-weight:400;">3.7</div>
<div class="abs" style="left:269px;top:628.7px;width:503px;height:1px;background:#1d2741"></div>
<div class="t" style="left:253px;top:637.9000000000001px;font-size:7.8px;color:#aeb3c2;font-weight:400;">3.6</div>
<div class="abs" style="left:269px;top:641.7px;width:503px;height:1px;background:#1d2741"></div>
<div class="t" style="left:253px;top:650.9000000000001px;font-size:7.8px;color:#aeb3c2;font-weight:400;">3.5</div>
<div class="abs" style="left:269px;top:654.7px;width:503px;height:1px;background:#1d2741"></div>
<div class="t" style="left:253px;top:663.9000000000001px;font-size:7.8px;color:#aeb3c2;font-weight:400;">3.4</div>
<div class="abs" style="left:269px;top:667.7px;width:503px;height:1px;background:#1d2741"></div>
<div class="t" style="left:253px;top:676.9000000000001px;font-size:7.8px;color:#aeb3c2;font-weight:400;">3.3</div>
<div class="abs" style="left:269px;top:680.7px;width:503px;height:1px;background:#1d2741"></div>
<div class="abs" style="left:269px;top:686.5px;width:503px;height:1px;background:#3d475d"></div>
<div class="abs" style="left:308.5px;top:687px;width:1px;height:4px;background:#3d475d"></div>
<div class="abs" style="left:378.1px;top:687px;width:1px;height:4px;background:#3d475d"></div>
<div class="abs" style="left:447.7px;top:687px;width:1px;height:4px;background:#3d475d"></div>
<div class="abs" style="left:517.3px;top:687px;width:1px;height:4px;background:#3d475d"></div>
<div class="abs" style="left:586.9px;top:687px;width:1px;height:4px;background:#3d475d"></div>
<div class="abs" style="left:656.5px;top:687px;width:1px;height:4px;background:#3d475d"></div>
<div class="abs" style="left:726.1px;top:687px;width:1px;height:4px;background:#3d475d"></div>
<div class="t" style="left:305.5px;top:692px;font-size:7.5px;color:#aeb3c2;font-weight:400;">26</div>
<div class="t" style="left:375.1px;top:692px;font-size:7.5px;color:#aeb3c2;font-weight:400;">27</div>
<div class="t" style="left:444.7px;top:692px;font-size:7.5px;color:#aeb3c2;font-weight:400;">28</div>
<div class="t" style="left:514.3px;top:692px;font-size:7.5px;color:#aeb3c2;font-weight:400;">29</div>
<div class="t" style="left:583.9px;top:692px;font-size:7.5px;color:#aeb3c2;font-weight:400;">30</div>
<div class="t" style="left:653.5px;top:692px;font-size:7.5px;color:#aeb3c2;font-weight:400;">31</div>
<div class="t" style="left:719.5px;top:692px;font-size:7.8px;color:#c9cdd8;font-weight:700;">Feb</div>
<svg class="abs" style="left:0;top:0" width="1380" height="736" style="pointer-events:none"><path d="M269.5 668 C330 662 380 661 410 661.3 C520 662 620 668 771.7 686.6" fill="none" stroke="#5470c6" stroke-width="1.5"/><path d="M270 677 L771 668.6" fill="none" stroke="#91cc75" stroke-width="1.5"/><circle cx="269.5" cy="668" r="2.3" fill="#fff" stroke="#5470c6" stroke-width="1.2"/><circle cx="771.7" cy="686.6" r="2.3" fill="#fff" stroke="#5470c6" stroke-width="1.2"/><circle cx="410" cy="661.5" r="2.3" fill="#fff" stroke="#5470c6" stroke-width="1.2"/><circle cx="270" cy="677" r="2.3" fill="#fff" stroke="#91cc75" stroke-width="1.2"/><circle cx="771" cy="668.6" r="2.3" fill="#fff" stroke="#91cc75" stroke-width="1.2"/><circle cx="409.3" cy="660" r="2.3" fill="#fff" stroke="#ee6666" stroke-width="1.2"/><circle cx="408.5" cy="597.5" r="2.3" fill="#fff" stroke="#fac858" stroke-width="1.2"/></svg>
<svg class="abs" style="left:0;top:0" width="1380" height="736"><rect x="272" y="720.5" width="501" height="16" fill="#1b3d56"/><path d="M272 725.2 C380 723.5 470 721.8 520 722 C600 723 690 728 773 730.5" fill="none" stroke="#1a86b8" stroke-width="1"/><rect x="270.3" y="721" width="3.4" height="12.5" rx="1.7" fill="#3aa6de" stroke="#8fd0f0" stroke-width="0.4"/><rect x="771.3" y="721" width="3.4" height="12.5" rx="1.7" fill="#3aa6de" stroke="#8fd0f0" stroke-width="0.4"/></svg>
<div class="t" style="left:819.6px;top:467.5px;font-size:10.2px;color:#ffffff;font-weight:700;">Top 3 Longest Flights</div>
<div class="t" style="left:819.6px;top:630.8px;font-size:10.2px;color:#ffffff;font-weight:700;">Top 3 Furthest Flights</div>
<div class="abs" style="left:825.5px;top:499.2px;width:17px;height:17px;border-radius:50%;background:#4a3d2c"></div>
<div class="t" style="left:831.6px;top:502.9px;font-size:9.3px;color:#f5a524;font-weight:700;">1</div>
<div class="t" style="left:852px;top:496.7px;font-size:10.7px;color:#f3f4f7;font-weight:400;">DJIFlightRecord_2026-01-25_[10-16-57]</div>
<div class="t" style="left:852px;top:511.0px;font-size:9px;color:#959bad;font-weight:400;">25 Jan 2026, 10:16 am</div>
<div class="t" style="left:0px;top:502.2px;font-size:10.7px;color:#14d9ae;font-weight:700;left:auto;right:17px">25m 34s</div>
<div class="abs" style="left:825.5px;top:542.5px;width:17px;height:17px;border-radius:50%;background:#333c52"></div>
<div class="t" style="left:831.6px;top:546.2px;font-size:9.3px;color:#e5e7eb;font-weight:700;">2</div>
<div class="t" style="left:852px;top:540px;font-size:10.7px;color:#f3f4f7;font-weight:400;">DJIFlightRecord_2026-02-01_[15-35-52]</div>
<div class="t" style="left:852px;top:554.3px;font-size:9px;color:#959bad;font-weight:400;">1 Feb 2026, 03:35 pm</div>
<div class="t" style="left:0px;top:545.5px;font-size:10.7px;color:#14d9ae;font-weight:700;left:auto;right:17px">25m 8s</div>
<div class="abs" style="left:825.5px;top:586.1px;width:17px;height:17px;border-radius:50%;background:#413032"></div>
<div class="t" style="left:831.6px;top:589.8000000000001px;font-size:9.3px;color:#f3932e;font-weight:700;">3</div>
<div class="t" style="left:852px;top:583.6px;font-size:10.7px;color:#f3f4f7;font-weight:400;">DJIFlightRecord_2026-01-27_[10-56-42]</div>
<div class="t" style="left:852px;top:597.9px;font-size:9px;color:#959bad;font-weight:400;">27 Jan 2026, 10:56 am</div>
<div class="t" style="left:0px;top:589.1px;font-size:10.7px;color:#14d9ae;font-weight:700;left:auto;right:17px">23m 44s</div>
<div class="abs" style="left:825.5px;top:662.0px;width:17px;height:17px;border-radius:50%;background:#4a3d2c"></div>
<div class="t" style="left:831.6px;top:665.7px;font-size:9.3px;color:#f5a524;font-weight:700;">1</div>
<div class="t" style="left:852px;top:659.5px;font-size:10.7px;color:#f3f4f7;font-weight:400;">DJIFlightRecord_2026-01-27_[10-32-04]</div>
<div class="t" style="left:852px;top:673.8px;font-size:9px;color:#959bad;font-weight:400;">27 Jan 2026, 10:32 am</div>
<div class="t" style="left:0px;top:665.0px;font-size:10.7px;color:#14d9ae;font-weight:700;left:auto;right:17px">185 m</div>
<div class="abs" style="left:825.5px;top:705.3px;width:17px;height:17px;border-radius:50%;background:#333c52"></div>
<div class="t" style="left:831.6px;top:709.0px;font-size:9.3px;color:#e5e7eb;font-weight:700;">2</div>
<div class="t" style="left:852px;top:702.8px;font-size:10.7px;color:#f3f4f7;font-weight:400;">DJIFlightRecord_2026-02-01_[15-11-28]</div>
<div class="t" style="left:852px;top:717.0999999999999px;font-size:9px;color:#959bad;font-weight:400;">1 Feb 2026, 03:11 pm</div>
<div class="t" style="left:0px;top:708.3px;font-size:10.7px;color:#14d9ae;font-weight:700;left:auto;right:17px">161 m</div></div>
</body></html>
